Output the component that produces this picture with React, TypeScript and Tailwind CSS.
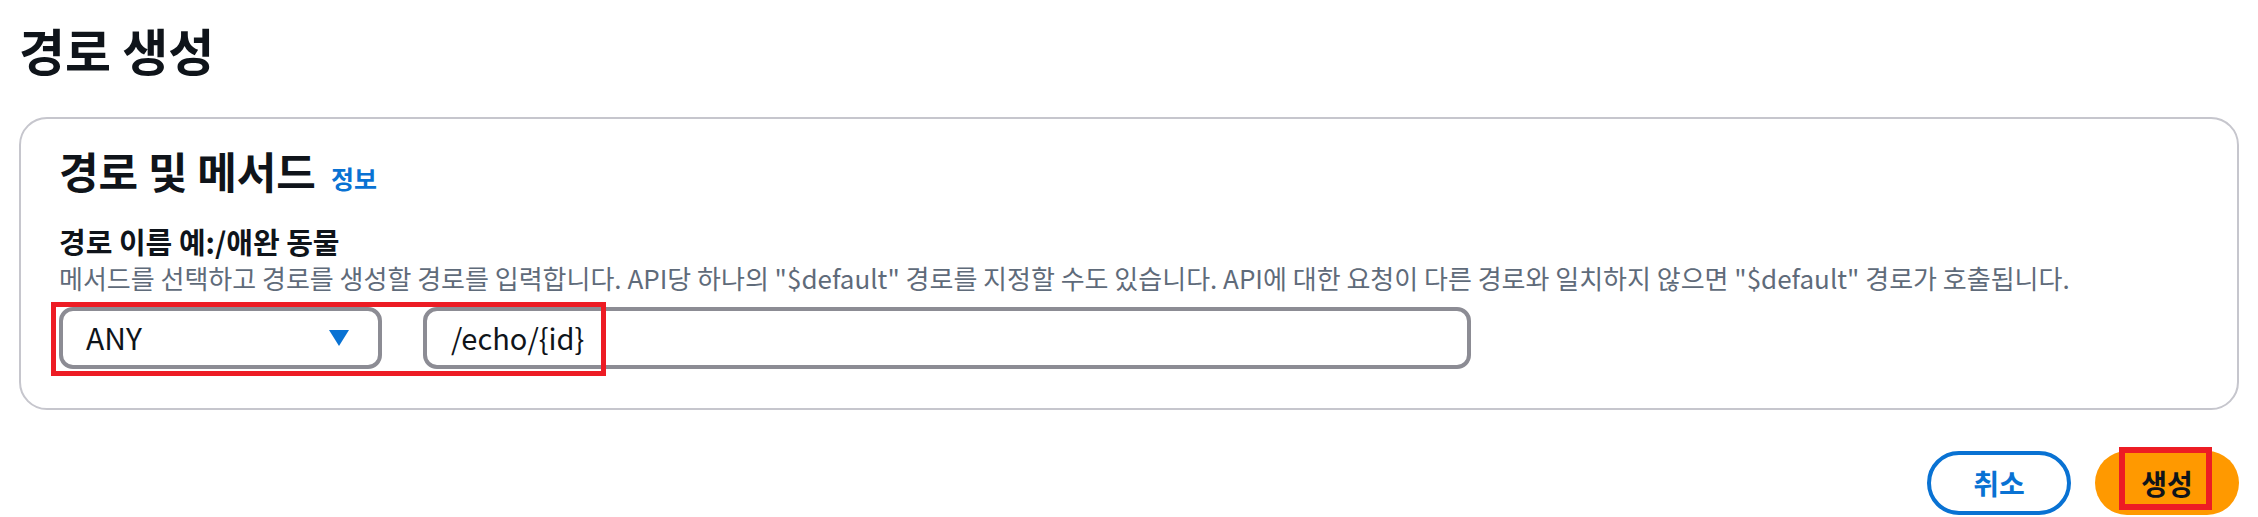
import React from "react";

const FONT = { fontFamily: '"Noto Sans CJK KR", "Noto Sans", sans-serif' };

export default function App() {
  return (
    <div
      className="w-[2258px] h-[517px] bg-white px-[19px] text-[#0f141a] overflow-hidden"
      style={FONT}
    >
      <h1 className="mt-[21px] text-[50px] leading-[56px] font-bold">경로 생성</h1>

      <div className="mt-[40px] rounded-[28px] border-2 border-[#c6c6cd] pl-[38px] pr-[38px] pt-[27px] pb-[39px]">
        <div className="flex items-baseline">
          <h2 className="text-[43px] leading-[48px] font-bold">경로 및 메서드</h2>
          <span className="ml-[15px] text-[25px] font-bold text-[#0972d3]">정보</span>
        </div>

        <div className="mt-[25px] text-[29px] leading-[36px] font-bold">경로 이름 예:/애완 동물</div>
        <div className="mt-[3px] text-[26px] leading-[32px] text-[#5f6b7a]">
          메서드를 선택하고 경로를 생성할 경로를 입력합니다. API당 하나의 "$default" 경로를 지정할 수도 있습니다. API에 대한 요청이 다른 경로와 일치하지 않으면 "$default" 경로가 호출됩니다.
        </div>

        <div className="relative mt-[13px] flex gap-[41px]">
          <div className="flex h-[62px] w-[323px] items-center justify-between rounded-[14px] border-4 border-[#8c8c94] pl-[23px] pr-[29px]">
            <span className="text-[30px]">ANY</span>
            <svg width="20" height="16" viewBox="0 0 20 16">
              <polygon points="0,0 20,0 10,16" fill="#0972d3" />
            </svg>
          </div>
          <div className="flex h-[62px] w-[1048px] items-center rounded-[14px] border-4 border-[#8c8c94] pl-[24px]">
            <span className="text-[29px]">/echo/{"{id}"}</span>
          </div>
          <div className="pointer-events-none absolute left-[-8px] top-[-5px] h-[74px] w-[555px] border-[5px] border-[#ed1c24]" />
        </div>
      </div>

      <div className="mt-[41px] flex justify-end gap-[24px]">
        <button className="flex h-[64px] w-[144px] items-center justify-center rounded-full border-4 border-[#0972d3] text-[28px] font-bold text-[#0972d3]">
          취소
        </button>
        <div className="relative">
          <button className="flex h-[64px] w-[144px] items-center justify-center rounded-full bg-[#ff9900] text-[28px] font-bold text-[#0f141a]">
            생성
          </button>
          <div className="pointer-events-none absolute left-[24px] top-[-4px] h-[63px] w-[93px] border-[6px] border-[#ed1c24]" />
        </div>
      </div>
    </div>
  );
}
